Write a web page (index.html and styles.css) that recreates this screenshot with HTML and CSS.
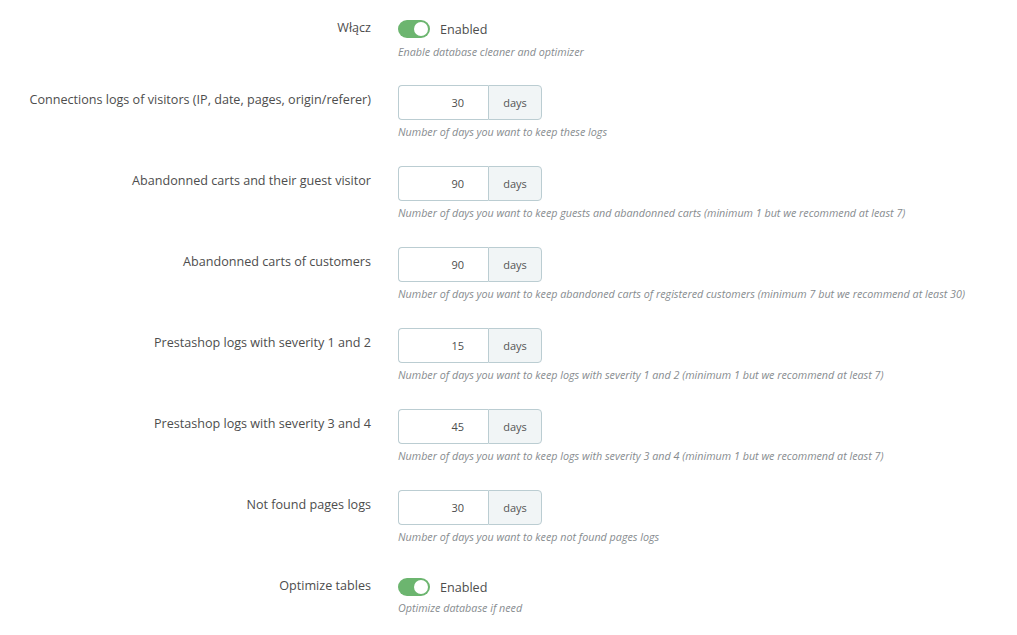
FILE: index.html
```html
<!DOCTYPE html>
<html lang="pl">
<head>
  <meta charset="UTF-8" />
  <title>Database cleaner</title>
  <link rel="stylesheet" href="styles.css">
</head>
<body>
  <div class="form-wrapper">

    <div class="form-row switch-row">
      <label class="row-label">Włącz</label>
      <div class="row-field">
        <div class="switch-line">
          <span class="switch on"><span class="knob"></span></span>
          <span class="switch-text">Enabled</span>
        </div>
        <p class="help">Enable database cleaner and optimizer</p>
      </div>
    </div>

    <div class="form-row">
      <label class="row-label">Connections logs of visitors (IP, date, pages, origin/referer)</label>
      <div class="row-field">
        <div class="input-group">
          <input type="text" value="30" />
          <span class="addon">days</span>
        </div>
        <p class="help">Number of days you want to keep these logs</p>
      </div>
    </div>

    <div class="form-row">
      <label class="row-label">Abandonned carts and their guest visitor</label>
      <div class="row-field">
        <div class="input-group">
          <input type="text" value="90" />
          <span class="addon">days</span>
        </div>
        <p class="help">Number of days you want to keep guests and abandonned carts (minimum 1 but we recommend at least 7)</p>
      </div>
    </div>

    <div class="form-row">
      <label class="row-label">Abandonned carts of customers</label>
      <div class="row-field">
        <div class="input-group">
          <input type="text" value="90" />
          <span class="addon">days</span>
        </div>
        <p class="help">Number of days you want to keep abandoned carts of registered customers (minimum 7 but we recommend at least 30)</p>
      </div>
    </div>

    <div class="form-row">
      <label class="row-label">Prestashop logs with severity 1 and 2</label>
      <div class="row-field">
        <div class="input-group">
          <input type="text" value="15" />
          <span class="addon">days</span>
        </div>
        <p class="help">Number of days you want to keep logs with severity 1 and 2 (minimum 1 but we recommend at least 7)</p>
      </div>
    </div>

    <div class="form-row">
      <label class="row-label">Prestashop logs with severity 3 and 4</label>
      <div class="row-field">
        <div class="input-group">
          <input type="text" value="45" />
          <span class="addon">days</span>
        </div>
        <p class="help">Number of days you want to keep logs with severity 3 and 4 (minimum 1 but we recommend at least 7)</p>
      </div>
    </div>

    <div class="form-row">
      <label class="row-label">Not found pages logs</label>
      <div class="row-field">
        <div class="input-group">
          <input type="text" value="30" />
          <span class="addon">days</span>
        </div>
        <p class="help">Number of days you want to keep not found pages logs</p>
      </div>
    </div>

    <div class="form-row switch-row last-row">
      <label class="row-label">Optimize tables</label>
      <div class="row-field">
        <div class="switch-line">
          <span class="switch on"><span class="knob"></span></span>
          <span class="switch-text">Enabled</span>
        </div>
        <p class="help">Optimize database if need</p>
      </div>
    </div>

  </div>
</body>
</html>
```

FILE: styles.css
```css
body {
  margin: 0;
  background-color: #fff;
  font-family: "Open Sans", Arial, sans-serif;
  color: #4a4a4a;
}

.form-wrapper {
  padding-top: 18px;
}

.form-row {
  display: grid;
  grid-template-columns: 371px 1fr;
  column-gap: 27px;
  margin-bottom: 26px;
}

.switch-row {
  margin-bottom: 25px;
}

.last-row {
  padding-top: 5px;
}

.last-row .help {
  margin-top: 2px;
}

.row-label {
  text-align: right;
  font-size: 12.6px;
  line-height: 20px;
  padding-top: 5px;
  color: #4d4d4d;
}

.switch-row .row-label {
  padding-top: 0;
  line-height: 20px;
}

.row-field {
  min-width: 0;
}

.switch-line {
  display: flex;
  align-items: center;
  height: 22px;
}

.switch {
  display: inline-block;
  position: relative;
  width: 32px;
  height: 18px;
  border-radius: 9px;
  background-color: #6cb56f;
}

.switch .knob {
  position: absolute;
  top: 2px;
  right: 2px;
  width: 14px;
  height: 14px;
  border-radius: 50%;
  background-color: #fff;
}

.switch-text {
  margin-left: 10px;
  font-size: 12.6px;
  color: #4d4d4d;
}

.input-group {
  display: flex;
  width: 144px;
  height: 35px;
}

.input-group input {
  width: 90px;
  box-sizing: border-box;
  border: 1px solid #bbcdd2;
  border-right: none;
  border-radius: 4px 0 0 4px;
  padding: 0 24px 0 6px;
  text-align: right;
  font-family: "Open Sans", Arial, sans-serif;
  font-size: 11px;
  color: #4d4d4d;
}

.addon {
  display: flex;
  align-items: center;
  justify-content: center;
  width: 54px;
  box-sizing: border-box;
  border: 1px solid #bbcdd2;
  border-radius: 0 4px 4px 0;
  background-color: #f1f5f6;
  font-size: 11px;
  color: #555;
}

.help {
  margin: 4px 0 0;
  font-size: 10.75px;
  line-height: 16px;
  font-style: italic;
  color: #878c8f;
}
```
